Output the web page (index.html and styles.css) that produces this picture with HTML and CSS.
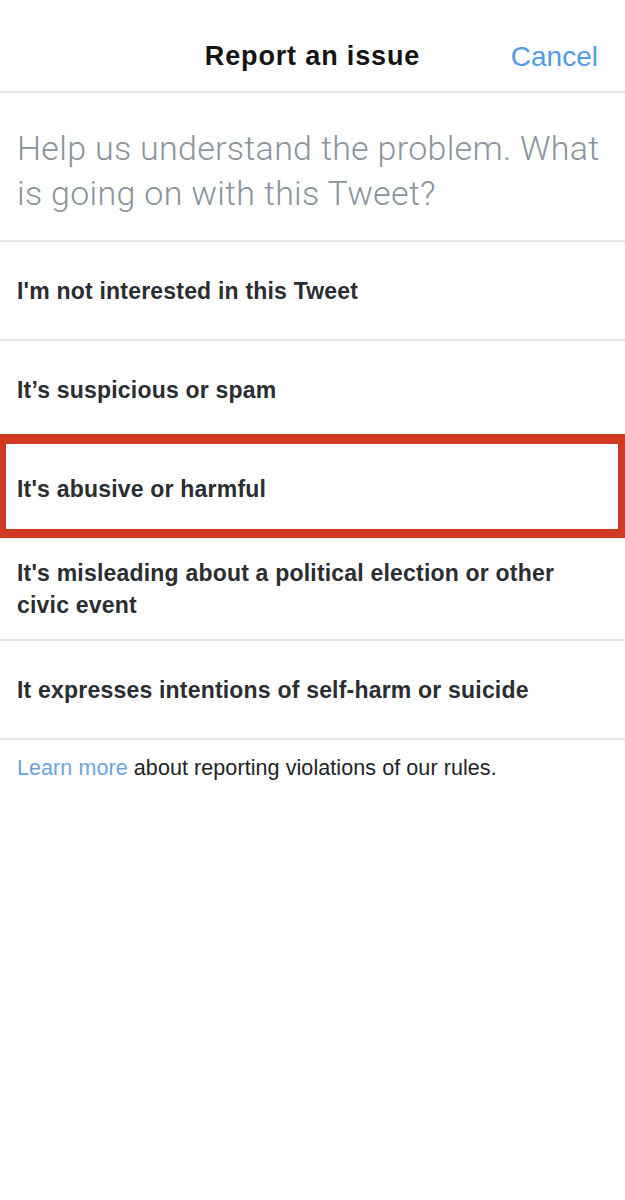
FILE: index.html
```html
<!DOCTYPE html>
<html lang="en">
<head>
<meta charset="utf-8">
<title>Report an issue</title>
<link rel="stylesheet" href="styles.css">
</head>
<body>
<div class="screen">
  <header class="header">
    <span class="spacer"></span>
    <h1 class="title">Report an issue</h1>
    <a class="cancel">Cancel</a>
  </header>
  <p class="prompt">Help us understand the problem. What is going on with this Tweet?</p>
  <ul class="options">
    <li class="option">I'm not interested in this Tweet</li>
    <li class="option">It’s suspicious or spam</li>
    <li class="option highlighted">It's abusive or harmful</li>
    <li class="option">It's misleading about a political election or other civic event</li>
    <li class="option">It expresses intentions of self-harm or suicide</li>
  </ul>
  <p class="learn"><a class="link">Learn more</a> about reporting violations of our rules.</p>
</div>
</body>
</html>
```

FILE: styles.css
```css
html, body {
  margin: 0;
  padding: 0;
  background: #ffffff;
}

body {
  font-family: "Liberation Sans", Arial, sans-serif;
}

.screen {
  width: 625px;
  min-height: 1200px;
  background: #ffffff;
}

.header {
  height: 69px;
  padding-top: 22px;
  display: grid;
  grid-template-columns: 1fr auto 1fr;
  align-items: center;
  border-bottom: 2px solid #e6e6e6;
}

.title {
  margin: 0;
  font-size: 27px;
  font-weight: 700;
  letter-spacing: 0.85px;
  color: #141414;
}

.cancel {
  justify-self: end;
  margin-right: 27px;
  font-size: 28px;
  color: #4f9ce0;
}

.prompt {
  margin: 0;
  padding: 33px 17px 24px;
  font-family: Roboto, "Liberation Sans", sans-serif;
  font-weight: 300;
  font-size: 34px;
  letter-spacing: 0.3px;
  line-height: 45px;
  color: #8a949d;
  border-bottom: 2px solid #e6e6e6;
}

.options {
  list-style: none;
  margin: 0;
  padding: 0;
}

.option {
  position: relative;
  display: flex;
  align-items: center;
  min-height: 61px;
  padding: 18px 24px 18px 17px;
  font-size: 23px;
  font-weight: 700;
  letter-spacing: 0.2px;
  line-height: 32px;
  color: #2a2d31;
  border-bottom: 2px solid #e6e6e6;
}

.highlighted::after {
  content: "";
  position: absolute;
  top: -6px;
  bottom: -1px;
  left: 0;
  right: 0;
  border-style: solid;
  border-color: #d03a22;
  border-width: 10px 7px 9px 6px;
}

.learn {
  margin: 0;
  padding: 14px 17px;
  font-size: 21.5px;
  letter-spacing: 0.08px;
  line-height: 28px;
  color: #222426;
}

.link {
  color: #6aa5dc;
}
```
